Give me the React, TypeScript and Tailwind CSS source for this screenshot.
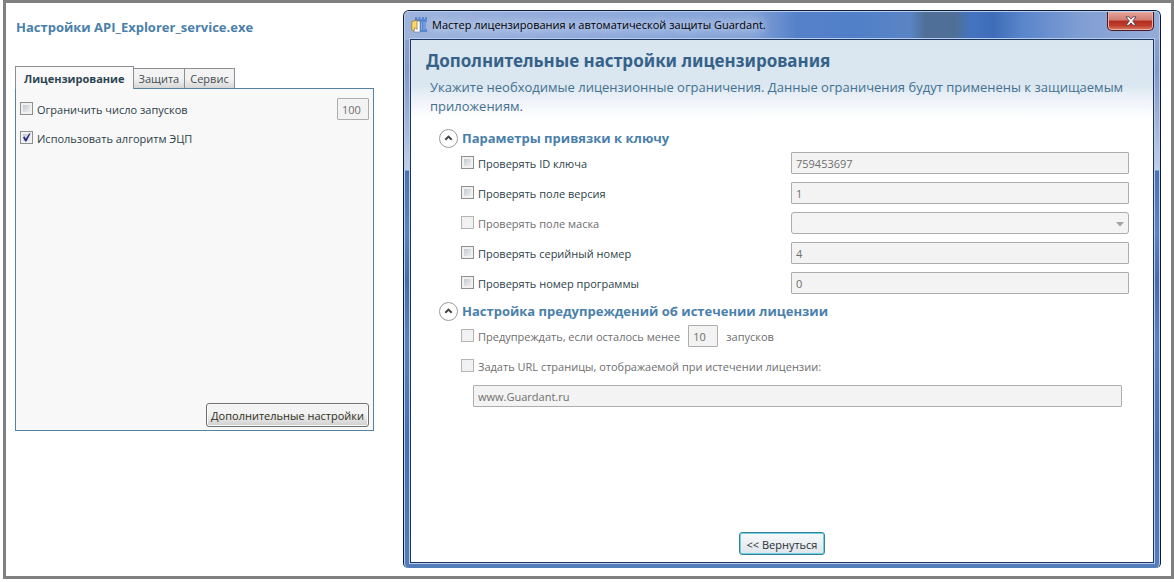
import { useState } from "react"
import type { ReactNode } from "react"

const keyParams = [
  { id: "key-id", label: "Проверять ID ключа", value: "759453697" },
  { id: "version", label: "Проверять поле версия", value: "1" },
  { id: "mask", label: "Проверять поле маска", value: "", disabled: true, select: true },
  { id: "serial", label: "Проверять серийный номер", value: "4" },
  { id: "program", label: "Проверять номер программы", value: "0" },
]

const tabs = ["Лицензирование", "Защита", "Сервис"]

const fieldClass = "h-[22px] min-w-0 border border-[#adadad] bg-[#f3f3f3] text-[#6e6e6e] rounded-[1px] px-1"

function Check({ id, label, checked, disabled }: { id: string; label: string; checked?: boolean; disabled?: boolean }) {
  return (
    <div className="flex items-start gap-1 pt-[2px]">
      <span className="relative flex h-[13px] w-[13px] shrink-0">
        <input
          id={id}
          type="checkbox"
          defaultChecked={checked}
          disabled={disabled}
          className="peer h-[13px] w-[13px] appearance-none border border-[#8e8f8f] bg-linear-to-br from-[#b8bec8] to-[#fafafa] shadow-[inset_0_0_0_2px_#f1f1f1] disabled:border-[#b4b4b4] disabled:from-[#f0f0f0] disabled:to-[#f6f6f6]"
        />
        <svg viewBox="0 0 13 13" className="pointer-events-none absolute inset-0 hidden h-[13px] w-[13px] peer-checked:block">
          <path d="M3 6.2 L4.6 5.6 L5.8 7.8 L9.2 2.4 L10.6 2.2 L6.4 10.4 L5.2 10.4 Z" fill="#26267f" />
        </svg>
      </span>
      <label htmlFor={id} className={disabled ? "text-[#6e6e6e]" : "text-[#2c3f47]"}>
        {label}
      </label>
    </div>
  )
}

function Section({ title, children }: { title: string; children: ReactNode }) {
  const [open, setOpen] = useState(true)

  return (
    <section className="pl-7">
      <h2>
        <button
          type="button"
          aria-expanded={open}
          onClick={() => setOpen(!open)}
          className="flex h-[22px] items-center gap-1 text-[13px] font-bold text-[#4a80ab]"
        >
          <svg viewBox="0 0 19 19" className="h-[19px] w-[19px] shrink-0" fill="none">
            <circle cx="9.5" cy="9.5" r="9" fill="#fff" stroke="#9a9a9a" />
            <path d={open ? "M6.3 10.8 L9.5 7.6 L12.7 10.8" : "M6.3 8.2 L9.5 11.4 L12.7 8.2"} stroke="#444" strokeWidth="2" />
          </svg>
          {title}
        </button>
      </h2>
      {open && <div className="mt-[3px] flex flex-col gap-2 pl-[22px]">{children}</div>}
    </section>
  )
}

function SettingsPanel() {
  const [active, setActive] = useState(0)

  return (
    <aside className="w-[359px] shrink-0 pt-2">
      <h1 className="pl-px text-[13px] leading-[18px] font-bold text-[#4a7fab]">Настройки API_Explorer_service.exe</h1>
      <div role="tablist" className="mt-[30px] flex h-[22px] items-end">
        {tabs.map((tab, i) => (
          <button
            key={tab}
            type="button"
            role="tab"
            aria-selected={active === i}
            onClick={() => setActive(i)}
            className={
              active === i
                ? "relative z-10 -mb-px h-[23px] shrink-0 border border-b-0 border-[#8c8e94] bg-[#f9f9f9] px-2 pt-px font-bold text-[#2c4450]"
                : "h-5 shrink-0 border border-b-0 border-l-0 border-[#8c8e94] bg-linear-to-b from-[#f3f3f3] from-50% to-[#d6d6d6] px-[5px] pt-px text-[#414b4f]"
            }
          >
            {tab}
          </button>
        ))}
      </div>
      <div className="flex min-h-[343px] flex-col border border-[#5582a0] bg-[#f8f8f8] px-1 pt-[9px] pb-[3px]">
        <div className="flex h-[22px] items-center justify-between">
          <Check id="limit-runs" label="Ограничить число запусков" />
          <input aria-label="Число запусков" disabled defaultValue="100" className={`${fieldClass} w-8`} />
        </div>
        <div className="mt-[7px] flex h-[22px] items-center">
          <Check id="use-ecp" label="Использовать алгоритм ЭЦП" checked />
        </div>
        <button
          type="button"
          className="mt-auto h-6 self-end rounded-[3px] border border-[#707070] bg-linear-to-b from-[#f3f3f3] from-45% to-[#cfcfcf] px-1 pt-[2px] text-[#2f2f1a] shadow-[inset_0_0_0_1px_#fafafa]"
        >
          Дополнительные настройки
        </button>
      </div>
    </aside>
  )
}

function AppIcon() {
  return (
    <svg viewBox="0 0 16 16" className="h-4 w-4 shrink-0">
      <path d="M4 0h2v2h1.500V0h2v2H11V0h2v2h1V0h2v5h-1.500v7H16v3H8V5H4z" fill="#5585d2" />
      <path d="M10 5h1v8h-1zM12.500 5h1v8h-1z" fill="#86abe4" />
      <path d="M3 4h6v11H3z" fill="#fff" stroke="#65748c" strokeWidth=".6" />
      <path d="M.8 4.500 6 3v9.500L4 10.500 2.500 14 .8 13z" fill="#fbd76b" stroke="#94701f" strokeWidth=".7" />
    </svg>
  )
}

function TitleBar() {
  return (
    <header className="flex h-[26px] items-start justify-between">
      <div className="flex h-[26px] items-center gap-[5px] pl-[2px] text-black">
        <AppIcon />
        <span className="[text-shadow:0_0_8px_#c9d7ef,0_0_8px_#c9d7ef,0_0_12px_#c9d7ef]">
          Мастер лицензирования и автоматической защиты Guardant.
        </span>
      </div>
      <button
        type="button"
        aria-label="Закрыть"
        className="mr-px flex h-[19px] w-[47px] items-center justify-center rounded-b-[5px] border border-t-0 border-[#4c1a20] bg-[linear-gradient(180deg,#e3a49b_0%,#d27c70_45%,#b02c20_50%,#c03c2a_75%,#d9806a_100%)] shadow-[inset_0_0_0_1px_#e9aea6]"
      >
        <svg viewBox="0 0 12 10" className="h-[10px] w-3">
          <path d="M1 .8h3l2 2.300L8 .8h3L7.700 5 11 9.200H8L6 6.900 4 9.200H1L4.300 5z" fill="#fff" stroke="#5b3d45" strokeWidth=".9" />
        </svg>
      </button>
    </header>
  )
}

function Wizard() {
  return (
    <main className="flex min-w-0 flex-1 flex-col rounded-t-md rounded-b-[5px] border border-b-0 border-[#0b1b38] bg-[linear-gradient(180deg,#93a9d0_0px,#8299c6_60px,#c0cfe9_159px,#4a72b0_160px,#5b84c2_220px,#466ca8_270px,#5b82c0_330px,#4770b0_430px,#537cba_100%)]">
      <div className="flex flex-1 flex-col rounded-t-[5px] rounded-b-[5px] border border-b-0 border-[#b9cdec] bg-[linear-gradient(90deg,#9db3db_0%,#8fa9dc_25%,#84a2d8_46%,#5581c9_52%,#5180c8_60%,#5a84c4_67%,#4f6f97_69%,#4f6f97_73%,#4474c0_75%,#3f6cb8_78%,#5a86cb_82%,#829fd4_90%,#94acd8_100%)] bg-[length:100%_28px] bg-no-repeat px-1 pb-1">
        <TitleBar />
        <div className="flex flex-1 flex-col border border-[#b9cdec]">
          <div className="flex flex-1 flex-col border border-[#1c3560] bg-[linear-gradient(180deg,#d9e6f0_0px,#dbe7f0_46px,#eaf0f8_56px,#fff_78px)] pt-[9px] pb-[7px]">
            <h1 className="pl-[15px] font-['Noto_Sans',sans-serif] text-[17px] leading-6 font-bold text-[#366289]">
              Дополнительные настройки лицензирования
            </h1>
            <p className="mt-[5px] mb-[11px] pr-5 pl-[19px] text-[13px] leading-[19px] text-[#44708f]">
              Укажите необходимые лицензионные ограничения. Данные ограничения будут применены к защищаемым приложениям.
            </p>
            <div className="flex flex-col gap-[6px]">
              <Section title="Параметры привязки к ключу">
                {keyParams.map((p) => (
                  <div key={p.id} className="grid h-[22px] grid-cols-[330px_1fr] items-center pr-6">
                    <Check id={p.id} label={p.label} disabled={p.disabled} />
                    {p.select ? (
                      <div className="relative flex">
                        <select
                          aria-label={p.label}
                          disabled
                          className="h-[22px] w-full appearance-none rounded-[3px] border border-[#adadad] bg-[#f4f4f4] opacity-100"
                        >
                          <option></option>
                        </select>
                        <svg viewBox="0 0 8 5" className="pointer-events-none absolute top-[10px] right-[5px] h-[5px] w-2">
                          <path d="M0 0h8L4 4.600z" fill="#a2a2a2" />
                        </svg>
                      </div>
                    ) : (
                      <input aria-label={`${p.label}: значение`} disabled defaultValue={p.value} className={fieldClass} />
                    )}
                  </div>
                ))}
              </Section>
              <Section title="Настройка предупреждений об истечении лицензии">
                <div className="flex h-[22px] items-center gap-2 text-[#6e6e6e]">
                  <Check id="warn" label="Предупреждать, если осталось менее" disabled />
                  <input aria-label="Осталось запусков" disabled defaultValue="10" className={`${fieldClass} w-[30px]`} />
                  <span className="pt-[2px]">запусков</span>
                </div>
                <div className="flex h-[22px] items-center">
                  <Check id="use-url" label="Задать URL страницы, отображаемой при истечении лицензии:" disabled />
                </div>
                <input aria-label="URL страницы" disabled defaultValue="www.Guardant.ru" className={`${fieldClass} mr-[31px] ml-3`} />
              </Section>
            </div>
            <button
              type="button"
              className="mt-auto h-[23px] self-center rounded-[3px] border border-[#3f7f93] bg-linear-to-b from-[#f8fafc] to-[#dfe5ea] px-[7px] pt-[2px] text-[#262e32] shadow-[inset_0_0_0_1px_#69d3e6]"
            >
              &lt;&lt; Вернуться
            </button>
          </div>
        </div>
      </div>
    </main>
  )
}

export default function App() {
  return (
    <div className="flex min-h-screen bg-white pb-[3px] pl-[3px] font-['Open_Sans','Noto_Sans',sans-serif] text-[11px] leading-4">
      <div className="flex flex-1 gap-[29px] border-[3px] border-[#808080] pt-[7px] pr-[10px] pb-2 pl-[9px]">
        <SettingsPanel />
        <Wizard />
      </div>
    </div>
  )
}
